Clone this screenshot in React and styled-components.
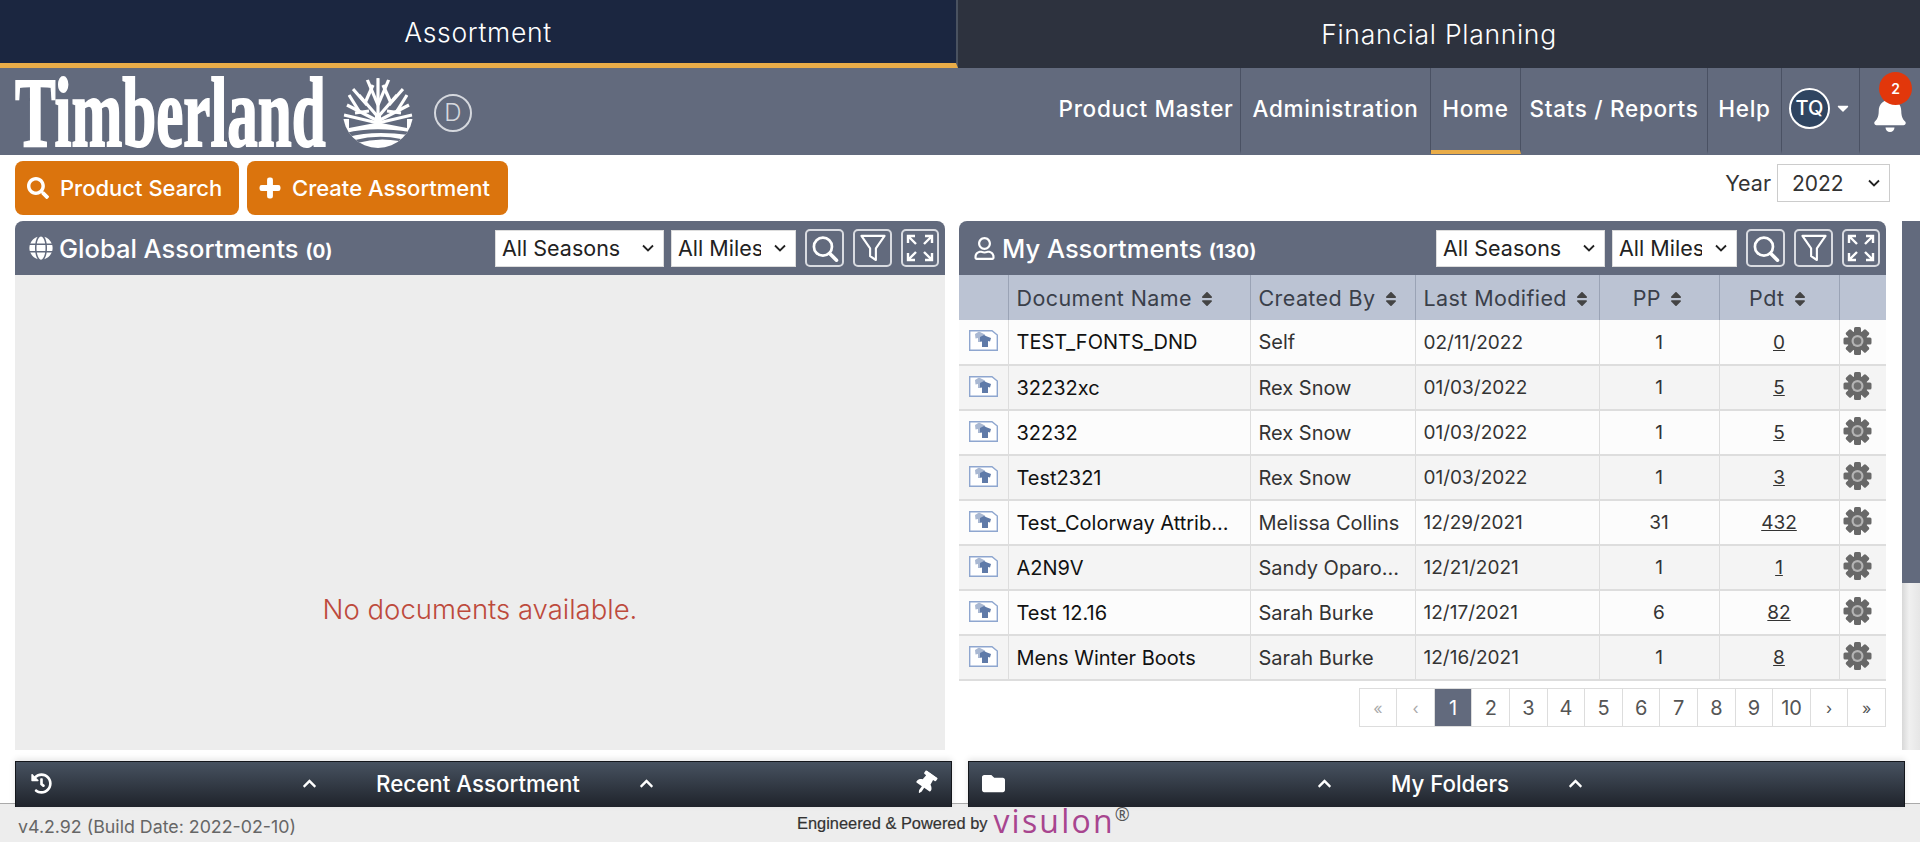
import styled, { createGlobalStyle } from "styled-components";
import {
  FaSearch,
  FaPlus,
  FaGlobe,
  FaRegUser,
  FaBell,
  FaSort,
  FaHistory,
  FaFolder,
  FaChevronUp,
  FaThumbtack,
  FaCaretDown,
} from "react-icons/fa";

const FONT = `"Inter", "Noto Sans", sans-serif`;
const ARROW = `url("data:image/svg+xml,%3Csvg xmlns='http://www.w3.org/2000/svg' width='12' height='8' viewBox='0 0 12 8'%3E%3Cpath d='M1 1.5L6 6.5L11 1.5' fill='none' stroke='%23222' stroke-width='1.8'/%3E%3C/svg%3E")`;

const rows = [
  ["TEST_FONTS_DND", "Self", "02/11/2022", "1", "0"],
  ["32232xc", "Rex Snow", "01/03/2022", "1", "5"],
  ["32232", "Rex Snow", "01/03/2022", "1", "5"],
  ["Test2321", "Rex Snow", "01/03/2022", "1", "3"],
  ["Test_Colorway Attrib...", "Melissa Collins", "12/29/2021", "31", "432"],
  ["A2N9V", "Sandy Oparo...", "12/21/2021", "1", "1"],
  ["Test 12.16", "Sarah Burke", "12/17/2021", "6", "82"],
  ["Mens Winter Boots", "Sarah Burke", "12/16/2021", "1", "8"],
];

const pages = ["«", "‹", "1", "2", "3", "4", "5", "6", "7", "8", "9", "10", "›", "»"];

function TreeLogo() {
  const crown = [
    "M35 48V24", "M35 40L16 18", "M35 40L54 18", "M35 44L4 28", "M35 44L66 28",
    "M35 46L1 38", "M35 46L69 38", "M35 28L24 2", "M35 28L46 2", "M35 24L35 1",
    "M24 28L10 12", "M46 28L60 12", "M22 26L30 8", "M48 26L40 8", "M16 34L6 18",
    "M54 34L64 18", "M26 34L12 36", "M44 34L58 36",
  ];
  return (
    <svg width="70" height="72" viewBox="0 0 70 72">
      <defs>
        <clipPath id="tree-clip">
          <circle cx="35" cy="36" r="35" />
        </clipPath>
      </defs>
      <g clipPath="url(#tree-clip)">
        <g stroke="#fff" strokeWidth="3.2" fill="none">
          {crown.map((d) => (
            <path key={d} d={d} />
          ))}
        </g>
        <path d="M0 42H6V51L32 46V36H38V46L64 51V42H70V72H0Z" fill="#fff" />
        <path d="M3 56Q30 49 67 55L66 58Q30 53 5 60Z" fill="#626a7d" />
        <path d="M12 63Q35 57 58 62L56 64Q35 60 14 66Z" fill="#626a7d" />
      </g>
    </svg>
  );
}

function GearIcon() {
  const teeth = [0, 45, 90, 135, 180, 225, 270, 315];
  return (
    <svg width="29" height="28" viewBox="0 0 29 28">
      <g fill="#686868">
        {teeth.map((a) => (
          <rect key={a} x="11" y="0" width="7" height="8" rx="1.5" transform={`rotate(${a} 14.5 14)`} />
        ))}
        <circle cx="14.5" cy="14" r="10" />
      </g>
      <circle cx="14.5" cy="14" r="6" fill="#b4b4b4" />
      <circle cx="14.5" cy="14" r="3.8" fill="#707070" />
    </svg>
  );
}

function DocIcon() {
  return (
    <svg width="29" height="21" viewBox="0 0 29 21">
      <path d="M0.7 0.7H23L28.3 5V20.3H0.7Z" fill="#fff" stroke="#8ea6cf" strokeWidth="1.4" />
      <path d="M6 4L10 1.5L13 3L16 4.5L15 8L13.5 7.5V12H9V8L6.5 8.5Z" fill="#a9b8d2" />
      <path d="M11 7L15 5L18 6.5L22 8L21 11.5L19 11V17H13V11L11 11.5Z" fill="#5f7aa8" />
    </svg>
  );
}

function MagnifyIcon() {
  return (
    <svg width="32" height="32" viewBox="0 0 32 32" fill="none" stroke="#fff" strokeWidth="3">
      <circle cx="14" cy="14" r="10" />
      <path d="M21.5 21.5L29 29" strokeWidth="4" strokeLinecap="round" />
    </svg>
  );
}

function FunnelIcon() {
  return (
    <svg width="28" height="30" viewBox="0 0 28 30" fill="none" stroke="#fff" strokeWidth="2.2" strokeLinejoin="round">
      <path d="M2 2H26L17 15V27L11 23V15Z" />
    </svg>
  );
}

function ExpandIcon() {
  return (
    <svg width="28" height="28" viewBox="0 0 28 28" fill="none" stroke="#fff" strokeWidth="2.4">
      <path d="M2 9V2H9M2 2L10 10M19 2H26V9M26 2L18 10M2 19V26H9M2 26L10 18M19 26H26V19M26 26L18 18" />
    </svg>
  );
}

function ToolButtons() {
  return (
    <>
      <ToolButton $width={39}><MagnifyIcon /></ToolButton>
      <ToolButton $width={39}><FunnelIcon /></ToolButton>
      <ToolButton $width={38}><ExpandIcon /></ToolButton>
    </>
  );
}

function PanelSelects() {
  return (
    <>
      <HeaderSelect $width={169} defaultValue="All Seasons">
        <option>All Seasons</option>
      </HeaderSelect>
      <HeaderSelect $width={125} defaultValue="All Milestones">
        <option>All Milestones</option>
      </HeaderSelect>
    </>
  );
}

export default function App() {
  return (
    <Page>
      <GlobalStyle />
      <Tabs>
        <Tab $active>Assortment</Tab>
        <Tab>Financial Planning</Tab>
      </Tabs>

      <NavBar>
        <Brand>
          <Wordmark><span>Timberland</span></Wordmark>
          <TreeLogo />
          <Division>D</Division>
        </Brand>
        <NavItems>
          <NavItem $width={189}>Product Master</NavItem>
          <NavItem $width={190}>Administration</NavItem>
          <NavItem $width={90} $active>Home</NavItem>
          <NavItem $width={187}>Stats / Reports</NavItem>
          <NavItem $width={74}>Help</NavItem>
          <NavItem $width={78}>
            <Avatar>TQ</Avatar>
            <FaCaretDown size={18} />
          </NavItem>
          <BellItem>
            <FaBell size={36} />
            <Badge>2</Badge>
          </BellItem>
        </NavItems>
      </NavBar>

      <ActionRow>
        <ActionGroup>
          <ActionButton $width={224}>
            <FaSearch size={22} />
            Product Search
          </ActionButton>
          <ActionButton $width={261}>
            <FaPlus size={22} strokeWidth={40} stroke="#fff" />
            Create Assortment
          </ActionButton>
        </ActionGroup>
        <YearField>
          Year
          <YearSelect defaultValue="2022">
            <option>2022</option>
          </YearSelect>
        </YearField>
      </ActionRow>

      <Panels>
        <Panel $width={930}>
          <PanelHeader>
            <PanelTitle>
              <FaGlobe size={24} />
              <span>Global Assortments <small>(0)</small></span>
            </PanelTitle>
            <PanelSelects />
            <ToolButtons />
          </PanelHeader>
          <EmptyBody>No documents available.</EmptyBody>
        </Panel>

        <Panel $width={927}>
          <PanelHeader>
            <PanelTitle>
              <FaRegUser size={23} />
              <span>My Assortments <small>(130)</small></span>
            </PanelTitle>
            <PanelSelects />
            <ToolButtons />
          </PanelHeader>
          <Table>
            <colgroup>
              <col width="49" />
              <col width="242" />
              <col width="165" />
              <col width="184" />
              <col width="120" />
              <col width="120" />
              <col width="47" />
            </colgroup>
            <thead>
              <tr>
                <th />
                <th>Document Name <FaSort size={18} /></th>
                <th>Created By <FaSort size={18} /></th>
                <th>Last Modified <FaSort size={18} /></th>
                <CenterTh>PP <FaSort size={18} /></CenterTh>
                <CenterTh>Pdt <FaSort size={18} /></CenterTh>
                <th />
              </tr>
            </thead>
            <tbody>
              {rows.map((r) => (
                <tr key={r[0]}>
                  <IconCell><DocIcon /></IconCell>
                  <NameCell>{r[0]}</NameCell>
                  <td>{r[1]}</td>
                  <DateCell>{r[2]}</DateCell>
                  <CenterCell>{r[3]}</CenterCell>
                  <CenterCell><u>{r[4]}</u></CenterCell>
                  <GearCell><GearIcon /></GearCell>
                </tr>
              ))}
            </tbody>
          </Table>
          <Pager>
            {pages.map((p) => (
              <PageCell key={p} $active={p === "1"} $muted={p === "«" || p === "‹"} $symbol={p.length === 1 && isNaN(p)}>
                {p}
              </PageCell>
            ))}
          </Pager>
        </Panel>

        <ScrollTrack>
          <ScrollThumb />
        </ScrollTrack>
      </Panels>

      <Dock>
        <DockBar $left={15} $right={14}>
          <DockIcon $width={21}><FaHistory size={21} /></DockIcon>
          <DockTitle>
            <FaChevronUp size={15} />
            Recent Assortment
            <FaChevronUp size={15} />
          </DockTitle>
          <DockIcon $width={33} $end><PinIcon size={23} /></DockIcon>
        </DockBar>
        <DockBar $left={13} $right={9}>
          <DockIcon $width={23}><FaFolder size={23} /></DockIcon>
          <DockTitle>
            <FaChevronUp size={15} />
            My Folders
            <FaChevronUp size={15} />
          </DockTitle>
        </DockBar>
      </Dock>

      <Footer>
        <Version>v4.2.92 (Build Date: 2022-02-10)</Version>
        <Powered>
          Engineered &amp; Powered by
          <Visulon>visulon<sup>®</sup></Visulon>
        </Powered>
      </Footer>
    </Page>
  );
}

const GlobalStyle = createGlobalStyle`
  html, body {
    margin: 0;
    padding: 0;
    background: #fff;
    overflow: hidden;
  }
  * { box-sizing: border-box; }
`;

const Page = styled.div`
  width: 1920px;
  height: 846px;
  font-family: ${FONT};
  display: flex;
  flex-direction: column;
  overflow: hidden;
`;

const Tabs = styled.div`
  display: flex;
  height: 68px;
`;

const Tab = styled.div`
  width: ${(p) => (p.$active ? "958px" : "962px")};
  height: 68px;
  display: flex;
  align-items: center;
  justify-content: center;
  color: #fff;
  font-size: 26.5px;
  font-weight: 300;
  letter-spacing: 0.7px;
  background: ${(p) => (p.$active ? "#1b2640" : "#2d323e")};
  border-bottom: ${(p) => (p.$active ? "5px solid #e9ac48" : "none")};
  border-right: ${(p) => (p.$active ? "2px solid #4a5260" : "none")};
`;

const NavBar = styled.div`
  height: 87px;
  background: #626a7d;
  display: flex;
  justify-content: space-between;
  color: #fff;
`;

const Brand = styled.div`
  display: flex;
  align-items: center;
  padding: 2px 0 0 15px;
`;

const Wordmark = styled.div`
  width: 328px;
  overflow: visible;
  font-family: "Liberation Serif", serif;
  font-weight: 700;
  font-size: 100px;
  line-height: 87px;

  span {
    display: inline-block;
    transform: scaleX(0.61);
    transform-origin: left center;
    -webkit-text-stroke: 2px #fff;
  }
`;

const Division = styled.div`
  width: 38px;
  height: 38px;
  margin-left: 21px;
  border: 2px solid #d5d8de;
  border-radius: 50%;
  display: flex;
  align-items: center;
  justify-content: center;
  color: #d5d8de;
  font-size: 24px;
  font-weight: 300;
`;

const NavItems = styled.div`
  display: flex;
  height: 87px;
`;

const NavItem = styled.div`
  width: ${(p) => p.$width}px;
  height: 86px;
  display: flex;
  align-items: center;
  justify-content: center;
  gap: 4px;
  padding-bottom: 2px;
  font-size: 22.5px;
  font-weight: 500;
  letter-spacing: 0.7px;
  white-space: nowrap;
  border-right: 1px solid #4a5163;
  border-bottom: 4px solid ${(p) => (p.$active ? "#e9ac48" : "transparent")};
`;

const BellItem = styled.div`
  position: relative;
  width: 60px;
  height: 86px;
  display: flex;
  align-items: center;
  justify-content: center;
  padding-top: 6px;
`;

const Badge = styled.span`
  position: absolute;
  top: 4px;
  right: 8px;
  width: 33px;
  height: 33px;
  border-radius: 50%;
  background: #e2370b;
  color: #fff;
  font-size: 14px;
  font-weight: 600;
  display: flex;
  align-items: center;
  justify-content: center;
`;

const Avatar = styled.span`
  width: 41px;
  height: 41px;
  border: 2px solid #fff;
  border-radius: 50%;
  background: #2f4561;
  display: flex;
  align-items: center;
  justify-content: center;
  font-size: 20px;
  font-weight: 500;
  letter-spacing: 0;
`;

const ActionRow = styled.div`
  height: 66px;
  padding: 6px 30px 0 15px;
  display: flex;
  justify-content: space-between;
`;

const ActionGroup = styled.div`
  display: flex;
  gap: 8px;
`;

const ActionButton = styled.button`
  width: ${(p) => p.$width}px;
  height: 54px;
  border: none;
  border-radius: 8px;
  background: #db740d;
  color: #fff;
  font-family: ${FONT};
  font-size: 22px;
  font-weight: 500;
  display: flex;
  align-items: center;
  gap: 11px;
  padding: 0 12px;
  white-space: nowrap;
`;

const YearField = styled.label`
  display: flex;
  align-items: center;
  gap: 6px;
  height: 38px;
  margin-top: 3px;
  font-size: 21.5px;
  color: #333;
`;

const YearSelect = styled.select`
  appearance: none;
  width: 113px;
  height: 38px;
  padding: 0 28px 0 14px;
  border: 1px solid #ccc;
  background: #fff ${ARROW} no-repeat right 9px center;
  color: #333;
  font-family: ${FONT};
  font-size: 21px;
`;

const Panels = styled.div`
  display: flex;
  height: 529px;
  padding-left: 15px;
`;

const Panel = styled.section`
  width: ${(p) => p.$width}px;
  margin-right: 14px;
  display: flex;
  flex-direction: column;

  & + & {
    margin-right: 16px;
  }
`;

const PanelHeader = styled.div`
  height: 54px;
  flex: none;
  background: #626a7d;
  border-radius: 8px 8px 0 0;
  display: flex;
  align-items: center;
  gap: 7px;
  padding: 0 6px 0 14px;
  color: #fff;
`;

const PanelTitle = styled.h2`
  flex: 1;
  margin: 0;
  display: flex;
  align-items: center;
  gap: 6px;
  white-space: pre;
  font-size: 25.5px;
  font-weight: 500;

  small {
    font-size: 19px;
    font-weight: 700;
  }
`;

const HeaderSelect = styled.select`
  appearance: none;
  width: ${(p) => p.$width}px;
  height: 37px;
  flex: none;
  padding: 0 34px 0 6px;
  border: 1px solid #ddd;
  background: #fff ${ARROW} no-repeat right 9px center;
  color: #222;
  font-family: ${FONT};
  font-size: 21.5px;
`;

const ToolButton = styled.span`
  width: ${(p) => p.$width}px;
  height: 38px;
  flex: none;
  margin-left: 2px;
  border: 2px solid #d9dbe1;
  border-radius: 5px;
  display: flex;
  align-items: center;
  justify-content: center;

  svg {
    max-width: 90%;
    max-height: 85%;
  }
`;

const EmptyBody = styled.div`
  flex: 1;
  background: #ededed;
  display: flex;
  align-items: center;
  justify-content: center;
  padding-top: 192px;
  color: #bd4a3c;
  font-size: 27.5px;
  font-weight: 300;
`;

const Table = styled.table`
  width: 927px;
  table-layout: fixed;
  border-collapse: collapse;
  font-size: 20px;
  color: #333;

  th {
    height: 45px;
    padding: 0 8px;
    background: #bbc3d3;
    border-right: 1px solid #9aa3b5;
    color: #3a3f4a;
    font-size: 21.5px;
    font-weight: 400;
    letter-spacing: 0.4px;
    text-align: left;
    white-space: nowrap;
  }
  th:last-child { border-right: none; }
  th svg { vertical-align: -2px; color: #444; }

  td {
    height: 45px;
    padding: 0 8px;
    border-right: 1px solid #ddd;
    border-bottom: 2px solid #ddd;
    white-space: nowrap;
    overflow: hidden;
  }
  td:last-child { border-right: none; }
  tbody tr:nth-child(odd) td { background: #fcfcfc; }
  tbody tr:nth-child(even) td { background: #f4f4f4; }
`;

const CenterTh = styled.th`
  && { text-align: center; }
`;

const CenterCell = styled.td`
  text-align: center;
  font-size: 19px;
`;

const DateCell = styled.td`
  font-size: 19px;
`;

const NameCell = styled.td`
  color: #111;
`;

const IconCell = styled.td`
  && { padding: 0; text-align: center; }
  svg { display: block; margin: 0 auto 3px; }
`;

const GearCell = styled(IconCell)`
  && { padding-right: 10px; }
`;

const Pager = styled.div`
  display: flex;
  justify-content: flex-end;
  margin-top: 7px;
`;

const PageCell = styled.span`
  width: 38.6px;
  height: 39px;
  margin-left: -1px;
  border: 1px solid #ddd;
  display: flex;
  align-items: center;
  justify-content: center;
  font-size: ${(p) => (p.$symbol ? "16px" : "20px")};
  background: ${(p) => (p.$active ? "#626a7d" : "#fff")};
  color: ${(p) => (p.$active ? "#fff" : p.$muted ? "#aaa" : "#555")};
`;

const ScrollTrack = styled.div`
  width: 18px;
  background: linear-gradient(90deg, #d8d8d8, #f0f0f0 40%, #e6e6e6);
`;

const ScrollThumb = styled.div`
  height: 362px;
  background: #626a7d;
`;

const Dock = styled.div`
  position: relative;
  z-index: 1;
  height: 46px;
  margin-top: 11px;
  padding-left: 15px;
  display: flex;
  gap: 16px;
`;

const DockBar = styled.div`
  width: 937px;
  height: 46px;
  padding: 0 ${(p) => p.$right}px 2px ${(p) => p.$left}px;
  background: linear-gradient(#475260, #1f232b);
  border: 1px solid #14171c;
  border-bottom: none;
  box-shadow: 0 -2px 6px rgba(0, 0, 0, 0.1);
  color: #fff;
  display: flex;
  align-items: center;
`;

const DockIcon = styled.span`
  width: ${(p) => p.$width}px;
  display: flex;
  justify-content: ${(p) => (p.$end ? "flex-end" : "flex-start")};
`;

const PinIcon = styled(FaThumbtack)`
  transform: rotate(35deg);
`;

const DockTitle = styled.div`
  flex: 1;
  display: flex;
  align-items: center;
  justify-content: center;
  gap: 59px;
  font-size: 22.3px;
  font-weight: 500;
`;

const Footer = styled.footer`
  height: 39px;
  margin-top: -4px;
  margin-bottom: 4px;
  padding-left: 18px;
  background: #ededed;
  border-top: 1px solid #aaa;
  position: relative;
  display: flex;
  align-items: center;
`;

const Version = styled.span`
  width: 779px;
  padding-top: 6px;
  color: #666;
  font-size: 17.8px;
  white-space: nowrap;
`;

const Powered = styled.span`
  display: flex;
  align-items: center;
  gap: 6px;
  font-family: "Liberation Sans", sans-serif;
  font-size: 16.4px;
  color: #333;
  -webkit-text-stroke: 0.2px #333;
`;

const Visulon = styled.span`
  font-family: "Open Sans", sans-serif;
  font-size: 32px;
  font-weight: 400;
  letter-spacing: 2.2px;
  line-height: 30px;
  margin-top: -5px;
  color: #a8458f;
  -webkit-text-stroke: 0;

  sup {
    font-size: 18px;
    letter-spacing: 0;
    color: #555;
    vertical-align: 12px;
    line-height: 0;
  }
`;
